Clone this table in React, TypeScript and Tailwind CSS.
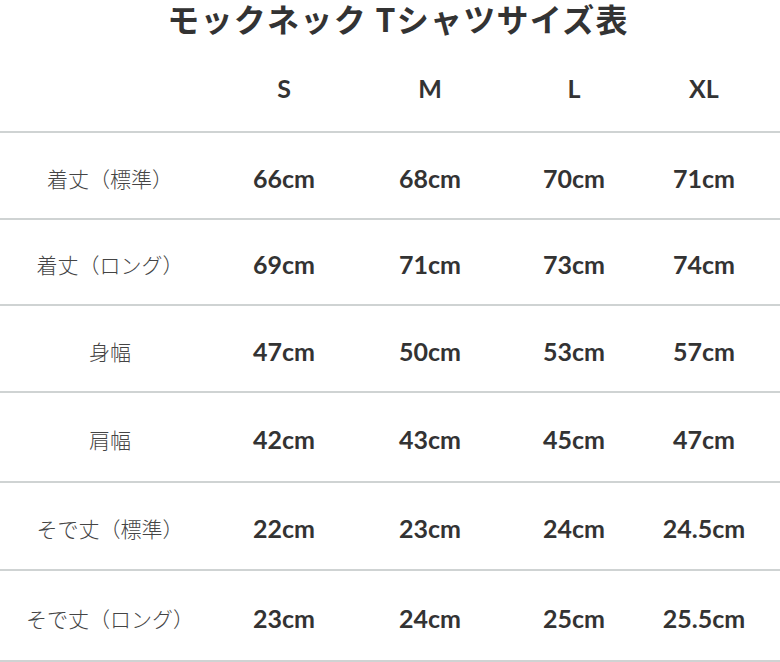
import React from "react";

const rows: { label: string; values: string[]; h: string }[] = [
  { label: "着丈（標準）", values: ["66cm", "68cm", "70cm", "71cm"], h: "h-[87px]" },
  { label: "着丈（ロング）", values: ["69cm", "71cm", "73cm", "74cm"], h: "h-[86px]" },
  { label: "身幅", values: ["47cm", "50cm", "53cm", "57cm"], h: "h-[87px]" },
  { label: "肩幅", values: ["42cm", "43cm", "45cm", "47cm"], h: "h-[90px]" },
  { label: "そで丈（標準）", values: ["22cm", "23cm", "24cm", "24.5cm"], h: "h-[88px]" },
  { label: "そで丈（ロング）", values: ["23cm", "24cm", "25cm", "25.5cm"], h: "h-[91px]" },
];

const grid = "grid grid-cols-[220px_128px_164px_124px_1fr] pr-[8px]";
const num = "flex items-center justify-center text-[25px] font-bold text-[#333333] [font-family:Lato,'Noto_Sans_CJK_JP',sans-serif]";

export default function App() {
  return (
    <div className="w-[780px] h-[662px] bg-white overflow-hidden">
      <div className="h-[36px] flex items-center justify-center">
        <h1 className="text-[32px] leading-[36px] font-bold text-[#333333] tracking-[0.04em] pl-[16px] [font-family:'Noto_Sans_CJK_JP',sans-serif]">
          モックネック Tシャツサイズ表
        </h1>
      </div>
      <div className={`${grid} h-[97px] pt-[10px] border-b-2 border-[#cfd3d3]`}>
        <div />
        {["S", "M", "L", "XL"].map((s) => (
          <div key={s} className={num}>
            {s}
          </div>
        ))}
      </div>
      {rows.map((r) => (
        <div key={r.label} className={`${grid} ${r.h} pt-[6px] border-b-2 border-[#cfd3d3]`}>
          <div className="flex items-center justify-center text-[21px] font-light text-[#444444] [font-family:'Noto_Sans_CJK_JP',sans-serif]">
            {r.label}
          </div>
          {r.values.map((v, i) => (
            <div key={i} className={num}>
              {v}
            </div>
          ))}
        </div>
      ))}
    </div>
  );
}
